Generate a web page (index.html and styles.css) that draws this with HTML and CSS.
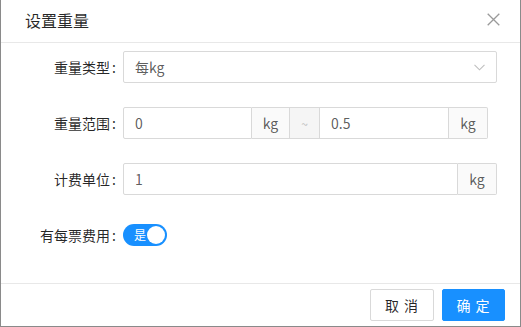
FILE: index.html
```html
<!DOCTYPE html>
<html lang="zh-CN">
<head>
<meta charset="utf-8">
<link rel="stylesheet" href="styles.css">
</head>
<body>
<div class="modal">
  <div class="modal-header">
    <div class="modal-title">设置重量</div>
    <svg class="close" width="13" height="13" viewBox="0 0 13 13"><path d="M0.7 0.7L12.3 12.3M12.3 0.7L0.7 12.3" stroke="#9a9a9a" stroke-width="1.3" fill="none"/></svg>
  </div>
  <div class="modal-body">
    <div class="row">
      <label class="label">重量类型<span class="colon">:</span></label>
      <div class="select">
        <span>每kg</span>
        <svg class="arrow" width="11" height="7" viewBox="0 0 11 7"><path d="M0.5 0.8L5.5 5.8L10.5 0.8" stroke="#bfbfbf" stroke-width="1.1" fill="none"/></svg>
      </div>
    </div>
    <div class="row">
      <label class="label">重量范围<span class="colon">:</span></label>
      <div class="group">
        <div class="input w-range">0</div>
        <div class="addon w-kg">kg</div>
        <div class="addon tilde">~</div>
        <div class="input w-range">0.5</div>
        <div class="addon w-kg2">kg</div>
      </div>
    </div>
    <div class="row">
      <label class="label">计费单位<span class="colon">:</span></label>
      <div class="group">
        <div class="input w-unit">1</div>
        <div class="addon w-kg2">kg</div>
      </div>
    </div>
    <div class="row">
      <label class="label">有每票费用<span class="colon">:</span></label>
      <div class="switch"><span class="switch-text">是</span><span class="knob"></span></div>
    </div>
  </div>
  <div class="modal-footer">
    <button class="btn">取 消</button>
    <button class="btn primary">确 定</button>
  </div>
</div>
</body>
</html>
```

FILE: styles.css
```css
* { box-sizing: border-box; }
html, body { margin: 0; padding: 0; background: #fff; }
body {
  font-family: "Noto Sans CJK SC", "Noto Sans", sans-serif;
  font-size: 14px;
  color: rgba(0,0,0,0.65);
}
.modal {
  width: 521px;
  height: 327px;
  border-left: 1px solid #8a8a8a;
  border-right: 1px solid #8a8a8a;
  border-bottom: 1px solid #8a8a8a;
  display: flex;
  flex-direction: column;
}
.modal-header {
  height: 43px;
  border-bottom: 1px solid #e8e8e8;
  display: flex;
  align-items: center;
  justify-content: space-between;
  padding: 0 20px 2px 24px;
}
.modal-title {
  font-size: 16px;
  color: rgba(0,0,0,0.85);
  line-height: 22px;
}
.close { display: block; margin-top: -1px; }
.modal-body {
  flex: 1;
  padding-top: 8px;
  display: flex;
  flex-direction: column;
  gap: 24px;
}
.row {
  display: flex;
  align-items: center;
  height: 32px;
}
.label {
  width: 122px;
  text-align: right;
  padding-right: 7px;
  color: rgba(0,0,0,0.85);
  white-space: nowrap;
}
.colon { margin-left: 2px; }
.select {
  width: 374px;
  height: 32px;
  border: 1px solid #d9d9d9;
  border-radius: 2px;
  display: flex;
  align-items: center;
  justify-content: space-between;
  padding: 0 11px 0 11px;
}
.arrow { display: block; }
.group { display: flex; height: 32px; }
.input {
  height: 32px;
  border: 1px solid #d9d9d9;
  display: flex;
  align-items: center;
  padding: 0 11px;
}
.addon {
  height: 32px;
  border: 1px solid #d9d9d9;
  border-left: none;
  background: #fafafa;
  display: flex;
  align-items: center;
  justify-content: center;
}
.group > .input:first-child { border-radius: 2px 0 0 2px; }
.group > .addon:last-child { border-radius: 0 2px 2px 0; }
.addon + .input { border-left: none; }
.w-range { width: 129px; }
.w-unit { width: 335px; }
.w-kg { width: 38px; }
.w-kg2 { width: 39px; }
.tilde {
  width: 30px;
  background: #f5f5f5;
  color: #bfbfbf;
  font-size: 12px;
}
.switch {
  width: 44px;
  height: 22px;
  border-radius: 11px;
  background: #1890ff;
  display: flex;
  align-items: center;
  justify-content: space-between;
  padding: 0 2px 0 11px;
}
.switch-text { color: #fff; font-size: 12px; line-height: 22px; }
.knob {
  width: 18px;
  height: 18px;
  border-radius: 50%;
  background: #fff;
}
.modal-footer {
  height: 43px;
  border-top: 1px solid #e8e8e8;
  display: flex;
  justify-content: flex-end;
  align-items: center;
  gap: 8px;
  padding: 0 15px 0 0;
}
.btn {
  font-family: inherit;
  font-size: 14px;
  height: 32px;
  width: 64px;
  border: 1px solid #d9d9d9;
  border-radius: 2px;
  background: #fff;
  color: rgba(0,0,0,0.85);
  padding: 0;
  letter-spacing: 1px;
}
.btn.primary {
  width: 63px;
  background: #1890ff;
  border-color: #1890ff;
  color: #fff;
}
```
